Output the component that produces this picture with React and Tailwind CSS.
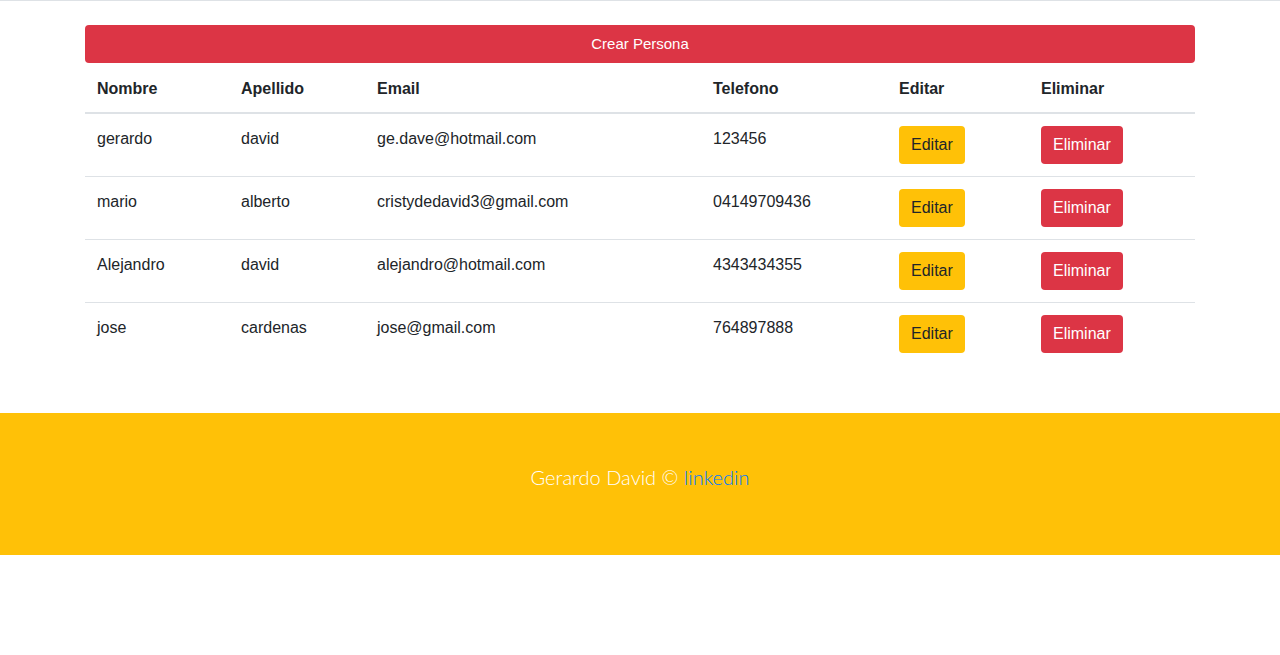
import React from 'react';

const personas = [
  { nombre: 'gerardo', apellido: 'david', email: 'ge.dave@hotmail.com', telefono: '123456' },
  { nombre: 'mario', apellido: 'alberto', email: 'cristydedavid3@gmail.com', telefono: '04149709436' },
  { nombre: 'Alejandro', apellido: 'david', email: 'alejandro@hotmail.com', telefono: '4343434355' },
  { nombre: 'jose', apellido: 'cardenas', email: 'jose@gmail.com', telefono: '764897888' },
];

export default function App() {
  return (
    <div className="min-h-screen bg-white text-[#212529] font-['Liberation_Sans',Arial,sans-serif] text-base">
      <div className="border-t border-[#dee2e6]" />
      <div className="w-[1110px] mx-auto pt-6">
        <button className="w-full h-[38px] rounded bg-[#dc3545] text-white text-[15px]">
          Crear Persona
        </button>

        <table className="w-full border-collapse table-fixed">
          <colgroup>
            <col className="w-[144px]" />
            <col className="w-[136px]" />
            <col className="w-[336px]" />
            <col className="w-[186px]" />
            <col className="w-[142px]" />
            <col className="w-[166px]" />
          </colgroup>
          <thead>
            <tr className="border-b-2 border-[#dee2e6]">
              <th className="text-left font-bold px-3 pt-[14px] pb-[11px] leading-6">Nombre</th>
              <th className="text-left font-bold px-3 pt-[14px] pb-[11px] leading-6">Apellido</th>
              <th className="text-left font-bold px-3 pt-[14px] pb-[11px] leading-6">Email</th>
              <th className="text-left font-bold px-3 pt-[14px] pb-[11px] leading-6">Telefono</th>
              <th className="text-left font-bold px-3 pt-[14px] pb-[11px] leading-6">Editar</th>
              <th className="text-left font-bold px-3 pt-[14px] pb-[11px] leading-6">Eliminar</th>
            </tr>
          </thead>
          <tbody>
            {personas.map((p, i) => (
              <tr key={i} className={i < personas.length - 1 ? 'border-b border-[#dee2e6]' : ''}>
                <td className="px-3 pt-[13px] align-top leading-6">{p.nombre}</td>
                <td className="px-3 pt-[13px] align-top leading-6">{p.apellido}</td>
                <td className="px-3 pt-[13px] align-top leading-6">{p.email}</td>
                <td className="px-3 pt-[13px] align-top leading-6">{p.telefono}</td>
                <td className="p-3 align-top">
                  <button className="h-[38px] px-3 rounded bg-[#ffc107] text-[#212529]">Editar</button>
                </td>
                <td className="p-3 align-top">
                  <button className="h-[38px] px-3 rounded bg-[#dc3545] text-white">Eliminar</button>
                </td>
              </tr>
            ))}
          </tbody>
        </table>
      </div>

      {/* footer */}
      <footer className="mt-12 h-[142px] bg-[#ffc107] pt-[49px] text-center">
        <p className="text-[20px] leading-[30px] text-white font-light font-['Lato',sans-serif]">
          Gerardo David © <a href="#" className="text-[#007bff]">linkedin</a>
        </p>
      </footer>
    </div>
  );
}
